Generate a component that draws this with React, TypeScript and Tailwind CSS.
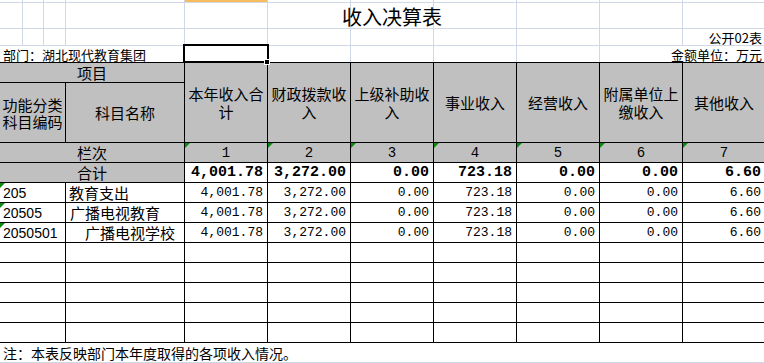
import React from "react";

const cjk = "font-['Noto_Sans_CJK_SC',sans-serif]";
const mono = "font-['Liberation_Mono',monospace]";
const sans = "font-['Liberation_Sans',sans-serif]";

function Tri() {
  return (
    <svg className="absolute left-0 top-0" width="5" height="5" viewBox="0 0 5 5">
      <polygon points="0,0 5,0 0,5" fill="#0b8a12" />
    </svg>
  );
}

const heads = ["本年收入合计", "财政拨款收入", "上级补助收入", "事业收入", "经营收入", "附属单位上缴收入", "其他收入"];
const totals = ["4,001.78", "3,272.00", "0.00", "723.18", "0.00", "0.00", "6.60"];
const rows = [
  { code: "205", name: "教育支出", pad: "pl-[3px]" },
  { code: "20505", name: "广播电视教育", pad: "pl-[4px]" },
  { code: "2050501", name: "广播电视学校", pad: "pl-[19px]" },
];

export default function App() {
  return (
    <div className="relative w-[764px] h-[363px] overflow-hidden bg-white text-black">
      {/* top spreadsheet area */}
      <div className="grid grid-cols-[22px_20px_21px_118px_82px_82px_82px_82px_82px_82px_82px] grid-rows-[2px_25px_16px_16px] gap-px bg-[#d0d7e5] w-[765px]">
        {/* row 0 */}
        {Array.from({ length: 11 }).map((_, i) => (
          <div key={"r0" + i} className={i === 4 ? "bg-[#f7bd5c]" : "bg-white"} />
        ))}
        {/* row 1 title */}
        {Array.from({ length: 11 }).map((_, i) =>
          i === 6 ? (
            <div key="title" className={`relative z-10 bg-white flex items-center justify-center whitespace-nowrap overflow-visible text-[20px] leading-none pt-[2px] ${cjk}`}>
              收入决算表
            </div>
          ) : (
            <div key={"r1" + i} className="bg-white" />
          )
        )}
        {/* row 2 */}
        {Array.from({ length: 10 }).map((_, i) => (
          <div key={"r2" + i} className="bg-white" />
        ))}
        <div className={`bg-white flex items-center justify-end pr-[3px] whitespace-nowrap text-[13px] leading-none ${cjk}`}>公开02表</div>
        {/* row 3 */}
        <div className={`col-span-4 bg-white flex items-center pl-[3px] whitespace-nowrap text-[13px] leading-none ${cjk}`}>部门：湖北现代教育集团</div>
        {Array.from({ length: 5 }).map((_, i) => (
          <div key={"r3" + i} className="bg-white" />
        ))}
        <div className={`col-span-2 bg-white flex items-center justify-end pr-[3px] whitespace-nowrap text-[13px] leading-none ${cjk}`}>金额单位：万元</div>
      </div>

      {/* main table */}
      <div className="grid grid-cols-[65px_118px_82px_82px_82px_82px_82px_82px_82px] grid-rows-[19px_59px_19px_19px_19px_19px_19px_19px_19px_19px_19px_19px] gap-px bg-black border-t border-b border-black w-[765px]">
        <div className={`col-span-2 bg-[#c0c0c0] flex items-center justify-center text-[15px] leading-none ${cjk}`}>项目</div>
        {heads.map((h) => (
          <div key={h} className={`row-span-2 bg-[#c0c0c0] flex items-center justify-center text-center text-[15px] leading-[18px] ${cjk}`}>
            {h}
          </div>
        ))}
        <div className={`bg-[#c0c0c0] flex items-center justify-center text-center text-[15px] leading-[17px] ${cjk}`}>功能分类科目编码</div>
        <div className={`bg-[#c0c0c0] flex items-center justify-center text-[15px] leading-none ${cjk}`}>科目名称</div>

        <div className={`col-span-2 bg-[#c0c0c0] flex items-center justify-center text-[15px] leading-none ${cjk}`}>栏次</div>
        {[1, 2, 3, 4, 5, 6, 7].map((n) => (
          <div key={"n" + n} className={`relative bg-[#c0c0c0] flex items-center justify-center text-[14px] leading-none ${mono}`}>
            <Tri />
            {n}
          </div>
        ))}

        <div className={`col-span-2 bg-[#c0c0c0] flex items-center justify-center text-[15px] leading-none ${cjk}`}>合计</div>
        {totals.map((t, i) => (
          <div key={"t" + i} className={`bg-white flex items-center justify-end pr-1 text-[15px] font-bold leading-none ${mono}`}>
            {t}
          </div>
        ))}

        {rows.map((r) => (
          <React.Fragment key={r.code}>
            <div className={`relative bg-white flex items-center pl-[3px] text-[14px] leading-none ${sans}`}>
              <Tri />
              {r.code}
            </div>
            <div className={`bg-white flex items-center ${r.pad} whitespace-nowrap text-[15px] leading-none ${cjk}`}>{r.name}</div>
            {["4,001.78", "3,272.00", "0.00", "723.18", "0.00", "0.00", "6.60"].map((v, i) => (
              <div key={r.code + i} className={`bg-white flex items-center justify-end pr-1 text-[13px] leading-none ${mono}`}>
                {v}
              </div>
            ))}
          </React.Fragment>
        ))}

        {Array.from({ length: 5 * 9 }).map((_, i) => (
          <div key={"e" + i} className="bg-white" />
        ))}
      </div>

      {/* footer */}
      <div className={`h-[20px] border-b border-[#d0d7e5] flex items-center pl-[3px] whitespace-nowrap text-[14px] leading-none ${cjk}`}>
        注：本表反映部门本年度取得的各项收入情况。
      </div>

      {/* selection overlay */}
      <div className="absolute left-[183px] top-[44px] w-[86px] h-[19px] border-2 border-black pointer-events-none" />
      <div className="absolute left-[264px] top-[59px] w-[6px] h-[6px] bg-black border border-white pointer-events-none" />
    </div>
  );
}
